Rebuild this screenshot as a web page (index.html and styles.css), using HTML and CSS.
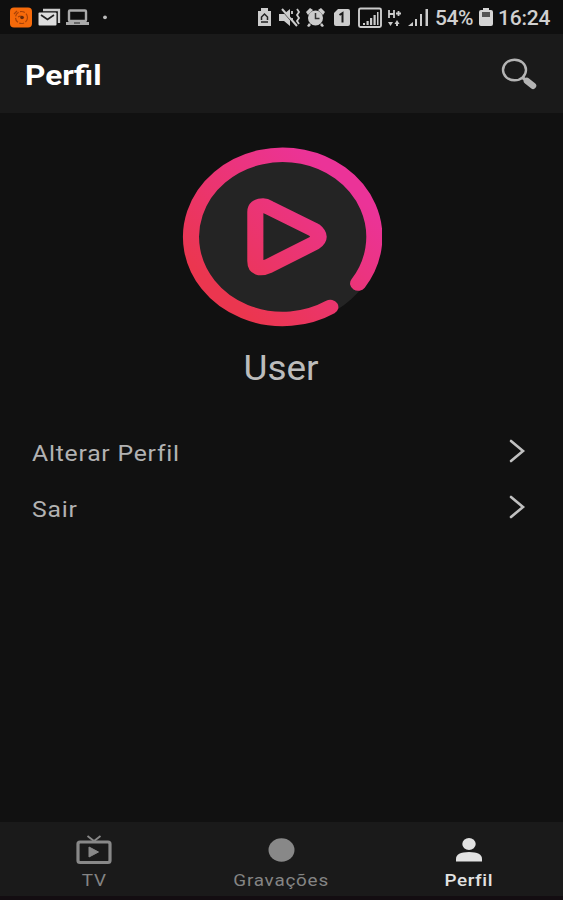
FILE: index.html
```html
<!DOCTYPE html>
<html lang="pt">
<head>
<meta charset="utf-8">
<title>Perfil</title>
<link rel="stylesheet" href="styles.css">
</head>
<body>
<div class="status">
  <svg class="status-left" width="110" height="34" viewBox="0 0 110 34">
    <rect x="10" y="7.500" width="22" height="20" rx="4" fill="#f66a0a"/>
    <g fill="none" stroke="#a94208" stroke-width="1.200"><circle cx="21.500" cy="17.500" r="6" stroke-dasharray="5 1.500"/><path d="M14 14l3-3M18 17q3-2 6 1"/></g>
    <circle cx="22" cy="17.500" r="1.800" fill="#632b0c"/>
    <path d="M43 10h16v13" fill="none" stroke="#ccc" stroke-width="2.300"/>
    <rect x="38.500" y="12.500" width="18" height="13" rx="1" fill="#ddd"/>
    <path d="M41 15l6.500 4.500L54 15" fill="none" stroke="#222" stroke-width="1.700"/>
    <rect x="69" y="10.500" width="17" height="10.500" rx="1" fill="none" stroke="#aaa" stroke-width="2.400"/>
    <path d="M66 22h23v3H66z" fill="#aaa"/><path d="M74 23h6" stroke="#222"/>
    <circle cx="105" cy="17.300" r="1.900" fill="#bbb"/>
  </svg>
  <svg class="status-right" width="176" height="34" viewBox="256 0 176 34">
    <g fill="#ccc">
      <path d="M258 11h3V8h7v3h3v15h-13z"/>
      <path d="M279 14h5l6-5v17l-6-5h-5z"/>
      <circle cx="315.500" cy="18" r="7.500"/>
      <path d="M306 12l4-4 3 2-5 5zM325 12l-4-4-3 2 5 5zM309 23l2 2-2 2-2-1zM322 23l-2 2 2 2 2-1z"/>
      <path d="M338 9h10q2 0 2 2v13q0 2-2 2h-12q-2 0-2-2V13z"/>
      <path d="M363 25v-2h2v2zM366.500 25v-4h2.200v4zM370 25v-7h2.200v7zM373.500 25v-10h2.200v10zM377 25V12h1.500v13z"/>
      <path d="M408 26l5-4v4zM415 26v-7h2v7zM420 26V14h2v12zM425.500 26V9h2.500v17z"/>
      <path d="M388 22h5l-2.500 4zM394.500 24l2.500-4 2.500 4h-1.500v2h-2v-2z"/>
    </g>
    <path d="M261.500 20v-3l3-3 3 3v3M261 22h7" fill="none" stroke="#222" stroke-width="1.500"/>
    <path d="M281 9l15 17" stroke="#111" stroke-width="1.500"/><path d="M282 9l15 17" stroke="#ccc" stroke-width="2"/>
    <path d="M292 11v3M292 18v3M297 9l2 3-2 3 2 3-2 3 2 3" fill="none" stroke="#ccc" stroke-width="1.800"/>
    <path d="M315.500 13v5.500h4" fill="none" stroke="#333" stroke-width="1.500"/>
    <path d="M339.500 15l3-2v9.500" fill="none" stroke="#1a1a1a" stroke-width="2"/>
    <rect x="359" y="8.500" width="22" height="18.500" rx="1.500" fill="none" stroke="#ccc" stroke-width="1.900"/>
    <path d="M389 10v8M394 10v8M389 14h5M396 13.500h5M398.500 11v5" stroke="#ccc" stroke-width="1.800"/>
  </svg>
  <span class="battery-text">54%</span>
  <svg class="battery" width="14" height="20" viewBox="0 0 14 20"><path d="M2 3h2V1h6v2h2q2 0 2 2v12q0 2-2 2H2q-2 0-2-2V5q0-2 2-2z" fill="#d5d5d5"/><path d="M3 5h8v5H3z" fill="#555"/></svg>
  <span class="clock">16:24</span>
</div>
<header class="header">
  <h1>Perfil</h1>
  <svg width="38" height="36" viewBox="0 0 38 36"><ellipse cx="14.500" cy="13" rx="11.500" ry="10.300" fill="none" stroke="#b4b4b4" stroke-width="2.400"/><path d="M22 20l4 3.500" stroke="#b4b4b4" stroke-width="3"/><path d="M27 24l6 4.700" stroke="#b4b4b4" stroke-width="6.500" stroke-linecap="round"/></svg>
</header>
<main class="content">
  <svg class="avatar" width="200" height="180" viewBox="0 0 180 180" preserveAspectRatio="none">
    <defs><linearGradient id="ring" gradientUnits="userSpaceOnUse" x1="35" y1="145" x2="145" y2="35"><stop offset="0" stop-color="#eb364f"/><stop offset="1" stop-color="#eb3398"/></linearGradient></defs>
    <circle cx="90" cy="90" r="88" fill="#242424"/>
    <g fill="none" stroke="url(#ring)" stroke-width="14.500" stroke-linecap="round" stroke-linejoin="round">
      <path d="M158.500 136.500A82.500 82.100 0 1 0 133.500 160"/>
      <path d="M66 65Q66 58.500 73 58.500Q75 58.500 78 60.500L119 83Q127 90 119 96L78 119Q66 125 66 114Z"/>
    </g>
  </svg>
  <h2>User</h2>
  <ul class="menu">
    <li><span>Alterar Perfil</span><svg width="17" height="26" viewBox="0 0 17 26"><path d="M2 3l12 10L2 23" fill="none" stroke="#c0c0c0" stroke-width="2.600" stroke-linecap="round"/></svg></li>
    <li><span>Sair</span><svg width="17" height="26" viewBox="0 0 17 26"><path d="M2 3l12 10L2 23" fill="none" stroke="#c0c0c0" stroke-width="2.600" stroke-linecap="round"/></svg></li>
  </ul>
</main>
<nav class="nav">
  <a><svg width="36" height="32" viewBox="0 0 36 32"><g fill="none" stroke="#888"><rect x="2" y="8" width="32" height="20.500" rx="2" stroke-width="3.200"/><path d="M11.500 2l6.500 5 6.500-5" stroke-width="1.800"/></g><path d="M13 13l9.500 5-9.500 5z" fill="#888" stroke="#888" stroke-linejoin="round"/></svg><span>TV</span></a>
  <a><svg width="36" height="32" viewBox="0 0 36 32"><ellipse cx="18.500" cy="16" rx="13" ry="11.700" fill="#888"/></svg><span>Gravações</span></a>
  <a class="active"><svg width="36" height="32" viewBox="0 0 36 32"><ellipse cx="18" cy="10" rx="6.700" ry="6" fill="#e2e2e2"/><path d="M5 27.500V25q0-7 13-7t13 7v2.500z" fill="#e2e2e2"/></svg><span>Perfil</span></a>
</nav>
</body>
</html>
```
FILE: styles.css
```css
* { box-sizing: border-box; }
body {
  margin: 0;
  height: 900px;
  display: flex;
  flex-direction: column;
  overflow: hidden;
  background: #111;
  color: #b2b2b2;
  font-family: Roboto, "Liberation Sans", sans-serif;
}
svg { display: block; flex: none; }
h1, h2, span { display: block; }
.status {
  height: 34px;
  display: flex;
  align-items: center;
  background: #0f0f0f;
  font-size: 21px;
  font-weight: 500;
  line-height: 34px;
  color: #d0d0d0;
}
.status-right { margin-left: 146px; }
.battery-text { width: 38px; margin-left: 3px; letter-spacing: -0.4px; padding-top: 2px; }
.battery { margin-left: 6px; }
.clock { margin-left: 5px; padding-top: 2px; letter-spacing: -0.2px; }
.header {
  height: 79px;
  padding: 3px 25px 0 25px;
  display: flex;
  align-items: center;
  justify-content: space-between;
  background: #1a1a1a;
}
h1 {
  margin: 2px 0 0;
  font-size: 28.5px;
  line-height: 34px;
  font-weight: 700;
  color: #fff;
  transform: scaleX(1.11);
  transform-origin: left;
}
.content { flex: 1; padding-top: 34px; }
.avatar { margin: 0 auto; }
h2 {
  width: fit-content;
  margin: 19px auto 0;
  font-size: 34.5px;
  line-height: 44px;
  font-weight: 400;
  color: #bcbcbc;
  transform: scaleX(1.07);
}
.menu { list-style: none; margin: 33px 0 0; padding: 0 37px 0 32px; }
.menu li {
  height: 56px;
  display: flex;
  align-items: center;
  justify-content: space-between;
}
.menu span {
  padding-top: 4px;
  font-size: 22.5px;
  letter-spacing: 0.7px;
  transform: scaleX(1.1);
  transform-origin: left;
}
.nav {
  height: 78px;
  padding-top: 12px;
  display: grid;
  grid-template-columns: repeat(3, 1fr);
  background: #1a1a1a;
  border-bottom: 4px solid #130d11;
}
.nav a {
  display: flex;
  flex-direction: column;
  align-items: center;
  color: #848484;
}
.nav span {
  margin-top: 4px;
  font-size: 17px;
  line-height: 20px;
  letter-spacing: 0.7px;
  transform: scaleX(1.11);
}
.nav .active { color: #e2e2e2; }
.nav .active span { font-weight: 500; letter-spacing: 0.5px; }
```
